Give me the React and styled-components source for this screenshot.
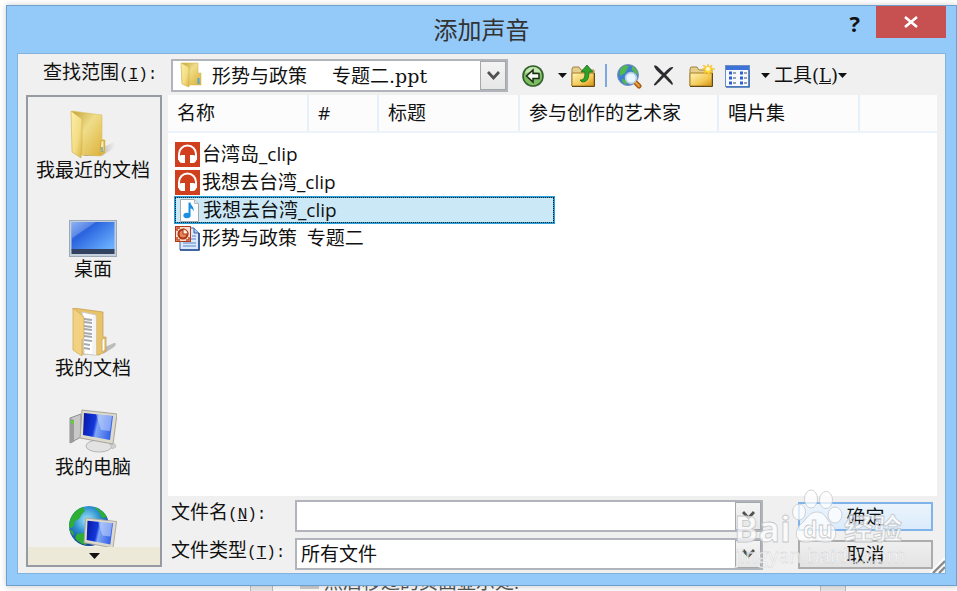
import { useState } from "react";
import styled, { createGlobalStyle, css } from "styled-components";

const columns = [
	{ label: "名称", width: 140 },
	{ label: "#", width: 70 },
	{ label: "标题", width: 141 },
	{ label: "参与创作的艺术家", width: 199 },
	{ label: "唱片集", width: 141 },
];

const files = [
	{ id: 1, name: "台湾岛_clip", Icon: AudioIcon },
	{ id: 2, name: "我想去台湾_clip", Icon: AudioIcon },
	{ id: 3, name: "我想去台湾_clip", Icon: NoteIcon },
	{ id: 4, name: "形势与政策\u00a0\u00a0专题二", Icon: PptIcon },
];

const places = [
	{ label: "我最近的文档", Icon: RecentIcon },
	{ label: "桌面", Icon: DesktopIcon },
	{ label: "我的文档", Icon: DocumentsIcon },
	{ label: "我的电脑", Icon: ComputerIcon },
];

function App() {
	const [selectedId, setSelectedId] = useState(3);
	const [fileName, setFileName] = useState("");

	return (
		<>
			<GlobalStyle />
			<Page>
				<Dialog role='dialog' aria-labelledby='dialog-title'>
					<TitleBar>
						<Title id='dialog-title'>添加声音</Title>
						<WindowButtons>
							<HelpButton aria-label='帮助'>?</HelpButton>
							<CloseButton aria-label='关闭'>
								<svg width='14' height='12' viewBox='0 0 14 12'>
									<path d='M1 1l12 10M13 1L1 11' stroke='#fff' strokeWidth='2.6' />
								</svg>
							</CloseButton>
						</WindowButtons>
					</TitleBar>

					<Client>
						<TopRow>
							<LookInLabel htmlFor='look-in'>
								查找范围
								<Latin>
									(<u>I</u>):
								</Latin>
							</LookInLabel>
							<LookIn>
								<SmallFolderIcon />
								<Select id='look-in' $indent>
									<option>形势与政策{"\u3000\u00a0"}专题二.ppt</option>
								</Select>
								<Arrow>
									<Chevron />
								</Arrow>
							</LookIn>
							<Toolbar />
						</TopRow>

						<Content>
							<Sidebar>
								<Places>
									{places.map(({ label, Icon }) => (
										<Place key={label}>
											<Icon />
											<span>{label}</span>
										</Place>
									))}
									<Place aria-label='网上邻居'>
										<NetworkIcon />
									</Place>
								</Places>
								<MoreButton aria-label='更多'>
									<Caret />
								</MoreButton>
							</Sidebar>

							<Main>
								<ListPane>
									<FileTable>
										<colgroup>
											{columns.map((col) => (
												<Col key={col.label} $width={col.width} />
											))}
											<col />
										</colgroup>
										<thead>
											<tr>
												{columns.map((col) => (
													<Th key={col.label}>{col.label}</Th>
												))}
												<Th $last />
											</tr>
										</thead>
										<tbody>
											{files.map(({ id, name, Icon }) => (
												<tr key={id} onClick={() => setSelectedId(id)}>
													<td colSpan={6}>
														<FileRow $selected={id === selectedId}>
															<Icon />
															{name}
														</FileRow>
													</td>
												</tr>
											))}
										</tbody>
									</FileTable>
								</ListPane>

								<Fields>
									<FieldLabel htmlFor='file-name'>
										文件名
										<Latin>
											(<u>N</u>):
										</Latin>
									</FieldLabel>
									<Combo>
										<TextInput
											id='file-name'
											type='text'
											value={fileName}
											onChange={(e) => setFileName(e.target.value)}
										/>
										<Arrow>
											<Chevron />
										</Arrow>
									</Combo>
									<Button $primary>确定</Button>

									<FieldLabel htmlFor='file-type'>
										文件类型
										<Latin>
											(<u>T</u>):
										</Latin>
									</FieldLabel>
									<Combo>
										<Select id='file-type'>
											<option>所有文件</option>
										</Select>
										<Arrow>
											<Chevron />
										</Arrow>
									</Combo>
									<Button>取消</Button>
								</Fields>
							</Main>
						</Content>
						<Grip width='15' height='15' viewBox='0 0 15 15'>
							<path d='M0 15L15 0M7 15l8-8' stroke='#fff' strokeWidth='2' />
							<path d='M3 15L15 3M9 15l6-6' stroke='#8c8c8c' strokeWidth='2.4' />
						</Grip>
					</Client>
					<Watermark />
				</Dialog>

				<Behind>
					<ScrollPiece />
					<BehindText>
						<i />
						然后移过的页面显示处.
					</BehindText>
					<ScrollPiece $wide />
				</Behind>
			</Page>
		</>
	);
}

export default App;

function Toolbar() {
	return (
		<Tools role='toolbar'>
			<IconButton aria-label='后退'>
				<svg width='24' height='24' viewBox='0 0 24 24'>
					<circle cx='11' cy='12' r='10.8' fill='#35602d' />
					<circle cx='11' cy='12' r='9.2' fill='#7dbd61' />
					<path d='M3 10a8 7 0 0 1 16 0c-4-3-12-3-16 0z' fill='#c4e6b2' />
					<path
						d='M4.5 12l6.5-6v3.5h6v5h-6V18z'
						fill='#f4fbf0'
						stroke='#1c2c18'
						strokeWidth='1.5'
					/>
				</svg>
			</IconButton>
			<Split>
				<Caret $small />
				<IconButton aria-label='向上一级'>
					<svg width='24' height='24' viewBox='0 0 24 24'>
						<ToolFolder />
						<path
							d='M9 16c4 0 5-2 5-8h-4l6-7 6 7h-4c0 7-2 10-7 10z'
							fill='#2fa32a'
							stroke='#1b6b1a'
							strokeWidth='.8'
						/>
					</svg>
				</IconButton>
			</Split>
			<Separator />
			<IconButton aria-label='搜索网络'>
				<svg width='26' height='26' viewBox='0 0 26 26'>
					<circle cx='11' cy='12' r='10.5' fill='#3f7fd0' stroke='#7d93b5' />
					<path
						d='M4 5c3-3 6-3 8-2l-2 3-2 4-5 3c-1-3 0-6 1-8zM15 3c4 2 6 5 6 9l-3-2-3-3zM5 16l4 1 1 4c-3 0-5-2-5-5z'
						fill='#55b94a'
					/>
					<path d='M18 19l4 4' stroke='#a85c16' strokeWidth='5' strokeLinecap='round' />
					<path d='M18 19l4 4' stroke='#e9a040' strokeWidth='2' strokeLinecap='round' />
					<circle cx='14' cy='15' r='5.4' fill='#e9f6ff' stroke='#b4cbe0' strokeWidth='1.6' />
				</svg>
			</IconButton>
			<IconButton aria-label='删除'>
				<svg width='24' height='24' viewBox='0 0 24 24'>
					<path
						d='M1 2c1-1 3 0 4 1l6 6c3-3 6-6 8-6 2 0 1 1 0 2l-6 6c3 3 6 6 7 9l-1 1c-2-2-5-5-8-8-3 3-6 6-8 8-2 1-3 0-1-2l7-8C6 9 2 5 1 2z'
						fill='#2b2b2f'
					/>
				</svg>
			</IconButton>
			<IconButton aria-label='新建文件夹'>
				<svg width='26' height='24' viewBox='0 0 26 24'>
					<ToolFolder />
					<path
						d='M19 0l1 3 3-2-1 3 4 1-4 1 2 3-3-1-1 4-2-4-3 2 1-4-3-1 3-1-2-3 4 2z'
						fill='#ffd83a'
						stroke='#f0b418'
						strokeWidth='.5'
					/>
					<circle cx='19' cy='5' r='2' fill='#fffbd0' />
				</svg>
			</IconButton>
			<IconButton aria-label='视图'>
				<svg width='25' height='24' viewBox='0 0 25 24'>
					<rect x='.5' y='1.5' width='24' height='21' fill='#f7faff' stroke='#6c8fc6' />
					<path d='M1 2h23v4H1z' fill='#3d73d8' />
					<path d='M24 6v17H1' fill='none' stroke='#3e6eb5' strokeWidth='1.6' />
					{[9, 14, 19].map((y) => (
						<g key={y}>
							<path d={`M4 ${y}h3M15 ${y}h3`} stroke='#2f5fd0' strokeWidth='3' />
							<path d={`M8 ${y}h3M19 ${y}h3`} stroke='#7b8496' strokeWidth='1.4' />
						</g>
					))}
				</svg>
			</IconButton>
			<Split>
				<Caret $small />
				<ToolsButton>
					<span>
						工具
						<Serif>
							(<u>L</u>)
						</Serif>
					</span>
					<Caret $small />
				</ToolsButton>
			</Split>
		</Tools>
	);
}

function ToolFolder() {
	return (
		<>
			<defs>
				<linearGradient id='tool-folder' x1='0' y1='0' x2='1' y2='1'>
					<stop offset='0' stopColor='#fff3b8' />
					<stop offset='.6' stopColor='#f3ca55' />
					<stop offset='1' stopColor='#d48f12' />
				</linearGradient>
			</defs>
			<path d='M1 5l1-2h6l2 3h13v16H1z' fill='#e6cf8c' stroke='#a18544' />
			<path d='M1 9h22v13H1z' fill='url(#tool-folder)' stroke='#a97d25' />
			<path d='M1 22.500h22.500V9' fill='none' stroke='#5f4a18' />
		</>
	);
}

function Caret({ $small }) {
	return (
		<svg width={$small ? 9 : 11} height={$small ? 5 : 6} viewBox='0 0 11 6'>
			<path d='M0 0h11L5.500 6z' fill='#111' />
		</svg>
	);
}

function Chevron() {
	return (
		<svg width='13' height='10' viewBox='0 0 13 10'>
			<path d='M1 1l5.500 6L12 1' fill='none' stroke='#505050' strokeWidth='2.800' />
		</svg>
	);
}

function FolderGradients() {
	return (
		<defs>
			<linearGradient id='flap' x1='0' y1='0' x2='1' y2='1'>
				<stop offset='0' stopColor='#fbf0a8' />
				<stop offset='.6' stopColor='#f3dc84' />
				<stop offset='1' stopColor='#d9b440' />
			</linearGradient>
			<linearGradient id='back' x1='0' y1='0' x2='1' y2='1'>
				<stop offset='0' stopColor='#c4a236' />
				<stop offset='.4' stopColor='#efdd8a' />
				<stop offset='1' stopColor='#dcae33' />
			</linearGradient>
			<linearGradient id='shadow' x1='0' y1='0' x2='1' y2='0'>
				<stop offset='0' stopColor='#777' />
				<stop offset='1' stopColor='#888' stopOpacity='0' />
			</linearGradient>
		</defs>
	);
}

function SmallFolderIcon() {
	return (
		<svg width='22' height='26' viewBox='0 0 22 26'>
			<FolderGradients />
			<path d='M2 1h16v10h3v12H8L2 20z' fill='url(#back)' stroke='#d9bd60' strokeWidth='.6' />
			<path d='M1 1l8 4v20l-7-3z' fill='url(#flap)' stroke='#cfae48' strokeWidth='.6' />
			<path d='M18.500 16v6' stroke='#4aa8dc' strokeWidth='2' />
		</svg>
	);
}

function RecentIcon() {
	return (
		<svg width='48' height='48' viewBox='0 0 48 48'>
			<FolderGradients />
			<path d='M33 38l10-5c5-1 4 4-1 7l-9 6H14z' fill='url(#shadow)' />
			<path d='M3 1l30 4v25h3v13l-5 3-20-1z' fill='url(#back)' stroke='#dcc168' strokeWidth='.6' />
			<path d='M2 1l11 8v24l-1 15L3 42z' fill='url(#flap)' stroke='#cfae48' strokeWidth='.6' />
			<path d='M32 31l3-1v11l-4 3z' fill='#f7f0c4' stroke='#d0a52a' />
			<path d='M33 37v5' stroke='#5c98b5' strokeWidth='1.400' />
		</svg>
	);
}

function DesktopIcon() {
	return (
		<svg width='48' height='48' viewBox='0 0 48 48'>
			<defs>
				<linearGradient id='screen' x1='0' y1='0' x2='1' y2='.8'>
					<stop offset='0' stopColor='#6f9ff0' />
					<stop offset='.35' stopColor='#2a63de' />
					<stop offset='1' stopColor='#69b0ff' />
				</linearGradient>
			</defs>
			<rect x='.5' y='11.500' width='47' height='36' fill='#c5d0df' stroke='#9ea9b7' />
			<rect x='2.500' y='13' width='43' height='28' fill='url(#screen)' />
			<path d='M3 13h24L3 29z' fill='#fff' opacity='.2' />
			<rect x='2.500' y='40' width='43' height='5' fill='#33435f' />
		</svg>
	);
}

function DocumentsIcon() {
	return (
		<svg width='48' height='48' viewBox='0 0 48 48'>
			<path d='M36 39l9-4c4 0 1 4-3 6l-8 5z' fill='#999' opacity='.6' />
			<path d='M4 0l30 4v25h3v14l-7 4-18-1z' fill='#e8c36a' stroke='#c39a45' strokeWidth='.7' />
			<path d='M13 4l14 3v40l-12-1z' fill='#fff' stroke='#ccc' />
			<path d='M24 7l3 3v37l-4-1z' fill='#f3f3f3' />
			<path
				d='M15 11l8 1M15 14l8 1M15 18l8 1M15 21l8 1M15 25l8 1M15 28l8 1M15 32l8 1M15 36l6 1M15 40l6 1'
				stroke='#a4a9b0'
				strokeWidth='2'
			/>
			<path d='M4 0l11 9v21l-2 2v16L4 42z' fill='#f2d281' stroke='#cda551' strokeWidth='.7' />
			<path d='M33 31l3-1v12l-3 2z' fill='#fff' stroke='#d0b060' />
		</svg>
	);
}

function Monitor() {
	return (
		<>
			<defs>
				<linearGradient id='monitor' x1='0' y1='0' x2='1' y2='.2'>
					<stop offset='0' stopColor='#0616a0' />
					<stop offset='.45' stopColor='#1438dc' />
					<stop offset='.55' stopColor='#7fa6f6' />
					<stop offset='1' stopColor='#3a66e8' />
				</linearGradient>
			</defs>
			<path d='M2 0l35 4-4 30L0 28z' fill='#ddd9cc' stroke='#a7a49b' />
			<path d='M4 3l29 3-3 24-27-5z' fill='url(#monitor)' />
			<path d='M16 4l16 2-2 15-9-1z' fill='#cfe0ff' opacity='.5' />
		</>
	);
}

function ComputerIcon() {
	return (
		<svg width='48' height='48' viewBox='0 0 48 48'>
			<path d='M1 11l11-4v23L1 36z' fill='#c9c9c9' stroke='#8e8e8e' />
			<path d='M1 11l4 2v22l-4 1z' fill='#9b9b9b' />
			<path d='M2 13l3 1v3l-3-1z' fill='#58d62a' />
			<path d='M25 30l12 2v6l-13-1z' fill='#bdbdbd' />
			<ellipse cx='30' cy='39' rx='13' ry='6' fill='#e2e2e2' stroke='#b5b5b5' />
			<path d='M41 37l5 0 1 3-4 2z' fill='#d0d0d0' stroke='#aaa' strokeWidth='.5' />
			<g transform='translate(11 3)'>
				<Monitor />
			</g>
		</svg>
	);
}

function NetworkIcon() {
	return (
		<svg width='50' height='41' viewBox='0 0 50 41'>
			<defs>
				<radialGradient id='globe' cx='.45' cy='.35' r='.65'>
					<stop offset='0' stopColor='#9fe6f8' />
					<stop offset='.5' stopColor='#2c8fd0' />
					<stop offset='1' stopColor='#163f94' />
				</radialGradient>
			</defs>
			<circle cx='21' cy='20' r='20' fill='url(#globe)' />
			<path
				d='M4 10c3-5 7-8 11-9l2 4-3 3-3 5-4 2-1 5-3 2-2-1c0-4 1-8 3-11zM26 1c6 2 10 5 13 10l-5 1-3-6zM9 28l7-1 4 5-2 7c-5-1-9-4-11-7zM1 23l4 2 1 5c-3-2-4-5-5-7z'
				fill='#2fae35'
			/>
			<g transform='translate(16 12) scale(.88)'>
				<Monitor />
			</g>
		</svg>
	);
}

function AudioIcon() {
	return (
		<svg width='25' height='25' viewBox='0 0 25 25'>
			<rect width='25' height='25' fill='#d0401f' />
			<path d='M4 18v-6a8.500 8.500 0 0 1 17 0v6' fill='none' stroke='#fff' strokeWidth='2' />
			<path
				d='M7 13h3v8H7c-2 0-3.500-2-3.500-4S5 13 7 13zM18 13h-3v8h3c2 0 3.500-2 3.500-4S20 13 18 13z'
				fill='#fff'
			/>
		</svg>
	);
}

function NoteIcon() {
	return (
		<svg width='25' height='25' viewBox='0 0 25 25'>
			<path d='M4.500 1.500h14l4 4v18h-18z' fill='#fdfdfd' stroke='#a5a9ad' />
			<path d='M18.500 1.500v4h4' fill='#e4e4e4' stroke='#b5b9bd' />
			<ellipse cx='11' cy='17.500' rx='3.600' ry='2.800' fill='#1d8fe0' />
			<path d='M12.500 17V4.500h2c0 3 4 4 3 9-1-3-2-3-3-3V17z' fill='#1d8fe0' />
		</svg>
	);
}

function PptIcon() {
	return (
		<svg width='25' height='25' viewBox='0 0 25 25'>
			<path d='M5 2h14l5 5v17H5z' fill='#dce9fc' stroke='#3964a8' />
			<path d='M19 2v5h5' fill='#a9c4ea' stroke='#3964a8' />
			<path d='M8 13h13M8 17h13M8 20h13M17 10h4' stroke='#83a4dc' strokeWidth='1.500' />
			<path d='M5 24h19V7' fill='none' stroke='#274f94' strokeWidth='1.600' />
			<rect x='.5' y='.5' width='15' height='15' fill='#f9dccd' stroke='#b23c1a' />
			<circle cx='8' cy='8' r='4.500' fill='#e7855a' stroke='#a93514' strokeWidth='2' />
			<path d='M8 8V3a5 5 0 0 1 5 5z' fill='#fff0e4' stroke='#a93514' />
			<path d='M2 5V2h3M2 11v3h3M11 14h3v-3' fill='none' stroke='#c24a22' strokeWidth='1.500' />
		</svg>
	);
}

function Watermark() {
	return (
		<Mark width='176' height='84' viewBox='0 0 176 84' aria-hidden='true'>
			<g fill='#fff' fillOpacity='.72' stroke='#c4c7ca' strokeWidth='.8'>
				<ellipse cx='77' cy='11' rx='6.500' ry='9' />
				<ellipse cx='92' cy='12' rx='6.500' ry='8.500' />
				<ellipse cx='65' cy='24' rx='6.500' ry='8' />
				<ellipse cx='101' cy='27' rx='7' ry='8' />
				<path d='M83 24c8 0 9 7 14 12 6 5 7 16-2 18-6 1-8-1-13-1s-8 2-13 1c-9-2-8-13-2-18 6-5 8-12 16-12z' />
				<text x='0' y='54' fontSize='36' fontWeight='700'>
					Bai
				</text>
				<text x='69' y='50' fontSize='23' fontWeight='700'>
					du
				</text>
				<text x='110' y='52' fontSize='29' fontWeight='700'>
					经验
				</text>
				<text x='1' y='75' fontSize='20' strokeWidth='.3'>
					jingyan.baidu.com
				</text>
			</g>
		</Mark>
	);
}

const GlobalStyle = createGlobalStyle`
	* {
		box-sizing: border-box;
	}

	body {
		margin: 0;
		background: #fff;
	}

	body, button, input, select {
		font-family: "Open Sans", "Noto Sans CJK SC", sans-serif;
		font-size: 19px;
		line-height: 24px;
		color: #111;
	}

	button {
		padding: 0;
		border: 0;
		background: none;
	}

	svg {
		display: block;
		flex-shrink: 0;
	}
`;

const Page = styled.div`
	min-height: 100vh;
	display: flex;
	flex-direction: column;
	padding: 5px 0 0 6px;
`;

const Dialog = styled.section`
	position: relative;
	flex: 1;
	display: flex;
	flex-direction: column;
	padding: 0 10px 11px;
	background: #94caf9;
	border: 1px solid #6f9fca;
	box-shadow: 0 0 6px rgba(0, 0, 0, 0.2);
`;

const TitleBar = styled.header`
	display: grid;
	grid-template-columns: 1fr auto 1fr;
	min-height: 47px;
`;

const Title = styled.h1`
	grid-column: 2;
	align-self: center;
	margin: 0;
	font-size: 24px;
	font-weight: 400;
	line-height: 32px;
	color: #333;
`;

const WindowButtons = styled.div`
	display: flex;
	justify-content: flex-end;
	align-items: flex-start;
	gap: 16px;
`;

const HelpButton = styled.button`
	font-size: 22px;
	font-weight: 700;
	line-height: 34px;
`;

const CloseButton = styled.button`
	width: 70px;
	height: 32px;
	display: grid;
	place-items: center;
	background: #c75050;
`;

const Client = styled.div`
	position: relative;
	flex: 1;
	display: flex;
	flex-direction: column;
	gap: 3px;
	padding: 5px 8px 3px;
	background: #f0f0f0;
	border: 1px solid #82b3dd;
`;

const TopRow = styled.div`
	display: flex;
	align-items: center;
`;

const LookInLabel = styled.label`
	width: 145px;
	padding: 0 0 4px 17px;
	white-space: nowrap;
`;

const Latin = styled.span`
	font-family: "Liberation Mono", monospace;
	font-size: 16px;
`;

const Serif = styled.span`
	font-family: "DejaVu Serif", serif;
	font-size: 18px;
`;

const Combo = styled.div`
	height: 32px;
	display: flex;
	align-items: stretch;
	background: #fff;
	border: 2px solid #b1b4ba;
`;

const LookIn = styled(Combo)`
	width: 337px;
	height: 33px;

	> svg {
		margin: 1px 0 0 7px;
	}
`;

const Select = styled.select`
	flex: 1;
	min-width: 0;
	appearance: none;
	border: 0;
	outline: 0;
	background: transparent;
	font-family: "DejaVu Serif", "Noto Sans CJK SC", serif;
	padding: 0 0 0 ${(props) => (props.$indent ? 10 : 4)}px;
`;

const TextInput = styled.input`
	flex: 1;
	min-width: 0;
	border: 0;
	outline: 0;
	padding: 0 4px;
`;

const Arrow = styled.span`
	width: 26px;
	display: grid;
	place-items: center;
	background: linear-gradient(#f4f4f4, #e6e6e6);
	border: 1px solid #a5a7ab;
	pointer-events: none;
`;

const Tools = styled.div`
	display: flex;
	align-items: center;
	gap: 10px;
	padding-left: 14px;
`;

const Split = styled.div`
	display: flex;
	align-items: center;
	gap: 4px;
`;

const IconButton = styled.button`
	width: 26px;
	height: 26px;
	display: flex;
	align-items: center;
`;

const Separator = styled.span`
	width: 2px;
	height: 23px;
	margin-left: -2px;
	background: #7ea6e0;
`;

const ToolsButton = styled.button`
	display: flex;
	align-items: center;
	white-space: nowrap;
`;

const Content = styled.div`
	flex: 1;
	display: flex;
	gap: 6px;
`;

const Sidebar = styled.nav`
	width: 136px;
	flex-shrink: 0;
	display: flex;
	flex-direction: column;
	margin-bottom: 3px;
	border: 2px solid #969aa2;
`;

const Places = styled.div`
	flex: 1;
	display: flex;
	flex-direction: column;
	gap: 27px;
	padding: 13px 2px 0 0;
`;

const Place = styled.button`
	display: flex;
	flex-direction: column;
	align-items: center;
	white-space: nowrap;
`;

const MoreButton = styled.button`
	height: 18px;
	display: grid;
	place-items: center;
	background: #ece9d8;
`;

const Main = styled.div`
	flex: 1;
	min-width: 0;
	display: flex;
	flex-direction: column;
	gap: 4px;
`;

const ListPane = styled.div`
	flex: 1;
	background: #fff;
`;

const FileTable = styled.table`
	width: 100%;
	table-layout: fixed;
	border-collapse: collapse;

	td {
		padding: 0 6px;
	}

	tbody::before {
		content: "";
		display: block;
		height: 7px;
	}
`;

const Col = styled.col`
	width: ${(props) => props.$width}px;
`;

const Th = styled.th`
	height: 37px;
	padding: 0 9px;
	text-align: left;
	font-weight: 400;
	white-space: nowrap;
	background: #fcfcfc;
	border-bottom: 2px solid #edf3fa;
	border-right: ${(props) => (props.$last ? "0" : "2px solid #e6f0fa")};
`;

const FileRow = styled.div`
	width: 381px;
	height: 28px;
	display: flex;
	align-items: center;
	gap: 2px;
	padding-left: 1px;
	white-space: nowrap;

	${(props) =>
		props.$selected &&
		css`
			background: #cbe8f6;
			border: 2px solid #26a0da;
			padding-left: 0;
			outline: 1px dotted #222;
			outline-offset: -2px;
		`}
`;

const Fields = styled.div`
	display: grid;
	grid-template-columns: 124px 1fr 170px;
	row-gap: 6px;
	align-items: start;
	padding: 0 4px 0 3px;
`;

const FieldLabel = styled.label`
	white-space: nowrap;
`;

const Button = styled.button`
	height: 29px;
	margin: 2px 0 0 35px;
	background: linear-gradient(#efefef, #e3e3e3);
	border: 2px solid #acacac;

	${(props) =>
		props.$primary &&
		css`
			background: linear-gradient(#ebf4fd, #dbebfb);
			border-color: #7eb4ea;
		`}
`;

const Grip = styled.svg`
	position: absolute;
	right: 0;
	bottom: 0;
`;

const Mark = styled.svg`
	position: absolute;
	right: 46px;
	bottom: 13px;
	pointer-events: none;
	font-family: "Open Sans", "Noto Sans CJK SC", sans-serif;
`;

const Behind = styled.div`
	height: 5px;
	display: flex;
	align-items: flex-end;
	padding-left: 244px;
	overflow: hidden;
	background: #fafafa;
`;

const ScrollPiece = styled.span`
	width: ${(props) => (props.$wide ? 26 : 23)}px;
	height: 6px;
	background: #e6e6e6;
	border: solid #bbb;
	border-width: 0 1px;
`;

const BehindText = styled.span`
	flex: 0 0 547px;
	display: flex;
	align-items: flex-end;
	gap: 5px;
	padding-left: 27px;
	white-space: nowrap;
	line-height: 18px;
	color: #555;

	i {
		width: 19px;
		height: 3px;
		margin-bottom: 2px;
		background: #ccc;
	}
`;
